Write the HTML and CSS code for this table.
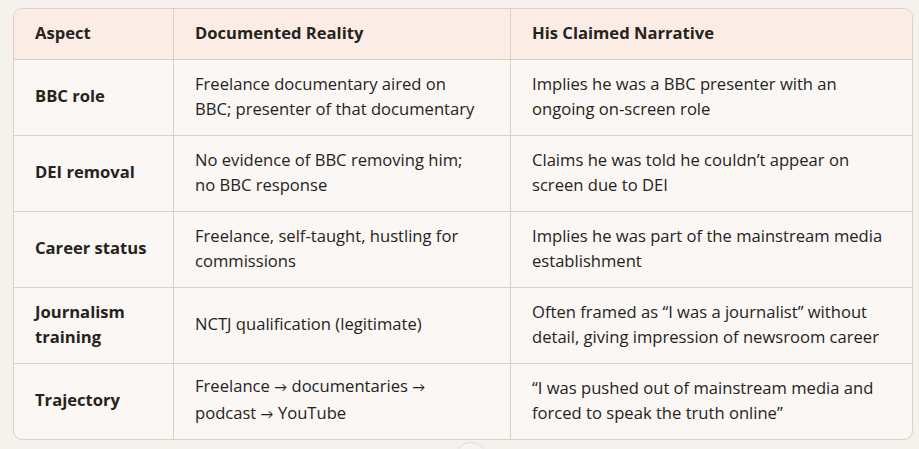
FILE: index.html
```html
<!DOCTYPE html>
<html lang="en">
<head>
<meta charset="utf-8">
<link rel="stylesheet" href="styles.css">
</head>
<body>
<div class="wrap">
  <table class="cmp">
    <colgroup>
      <col class="c1"><col class="c2"><col class="c3">
    </colgroup>
    <thead>
      <tr><th>Aspect</th><th class="mid">Documented Reality</th><th>His Claimed Narrative</th></tr>
    </thead>
    <tbody>
      <tr><td class="k">BBC role</td><td class="mid">Freelance documentary aired on BBC; presenter of that documentary</td><td>Implies he was a BBC presenter with an ongoing on-screen role</td></tr>
      <tr><td class="k">DEI removal</td><td class="mid">No evidence of BBC removing him; no BBC response</td><td>Claims he was told he couldn’t appear on screen due to DEI</td></tr>
      <tr><td class="k">Career status</td><td class="mid">Freelance, self-taught, hustling for commissions</td><td>Implies he was part of the mainstream media establishment</td></tr>
      <tr><td class="k">Journalism training</td><td class="mid">NCTJ qualification (legitimate)</td><td>Often framed as “I was a journalist” without detail, giving impression of newsroom career</td></tr>
      <tr><td class="k">Trajectory</td><td class="mid">Freelance <span class="arr">→</span> documentaries <span class="arr">→</span> podcast <span class="arr">→</span> YouTube</td><td>“I was pushed out of mainstream media and forced to speak the truth online”</td></tr>
    </tbody>
  </table>
  <div class="scroll-btn"></div>
</div>
</body>
</html>
```
FILE: styles.css
```css
html, body { margin: 0; padding: 0; }
body {
  background: #f5f2ee;
  font-family: "Open Sans", Lato, sans-serif;
  color: #26231d;
  width: 919px;
  height: 449px;
  overflow: hidden;
}
.wrap {
  position: relative;
  padding: 8px 0 0 13px;
  height: 441px;
  overflow: hidden;
}
.cmp {
  width: 900px;
  table-layout: fixed;
  border-collapse: separate;
  border-spacing: 0;
  border: 1px solid #dfcfc2;
  border-radius: 9px;
  overflow: hidden;
  background: #faf7f4;
  font-size: 16.6px;
  line-height: 25px;
}
.c1 { width: 160px; }
.c2 { width: 337px; }
.c3 { width: auto; }
th, td {
  text-align: left;
  vertical-align: middle;
  padding: 0 18px 4px 21px;
  border-right: 1px solid #dfcfc2;
  border-bottom: 1px solid #dfcfc2;
}
th.mid, td.mid { padding-right: 30px; }
th:last-child, td:last-child { border-right: none; }
tbody tr:last-child td { border-bottom: none; }
th {
  background: #fbede5;
  height: 46px;
  font-weight: 700;
}
td { height: 71px; }
td.k { font-weight: 700; }
.arr { font-size: 13px; }
.scroll-btn {
  position: absolute;
  left: 455px;
  top: 442px;
  width: 30px;
  height: 30px;
  border-radius: 50%;
  border: 1px solid #e4dfda;
  background: #f7f4f1;
}
```
